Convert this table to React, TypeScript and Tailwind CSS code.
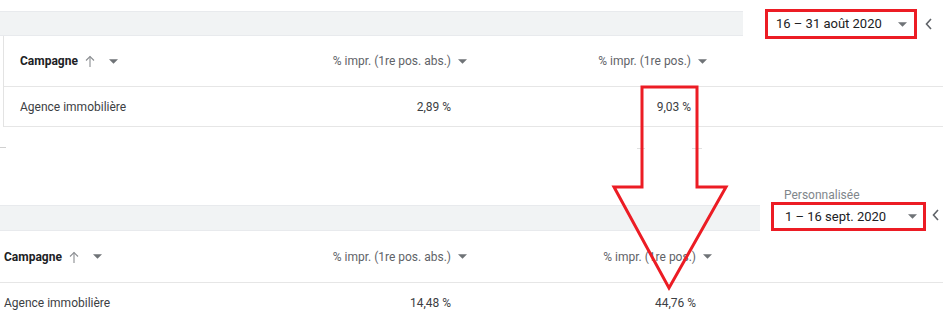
import React from "react";

type Col = { label: string; value: string };

const RED = "#ec1c24";

function DropTri({ className = "" }: { className?: string }) {
  return (
    <svg viewBox="0 0 10 5" className={`h-[5px] w-[9px] shrink-0 ${className}`}>
      <polygon points="0,0 10,0 5,5" fill="#6f7377" />
    </svg>
  );
}

function UpArrow() {
  return (
    <svg viewBox="0 0 10 12" className="h-[12px] w-[10px] shrink-0">
      <polyline points="1,5.5 5,1.5 9,5.5" fill="none" stroke="#8a8d91" strokeWidth="1.1" />
      <line x1="5" y1="1.5" x2="5" y2="12" stroke="#8a8d91" strokeWidth="1.1" />
    </svg>
  );
}

function Chevron() {
  return (
    <svg viewBox="0 0 7 12" className="h-[12px] w-[7px] shrink-0">
      <polyline points="6,1 1.5,6 6,11" fill="none" stroke="#5f6368" strokeWidth="1.6" />
    </svg>
  );
}

// one results table (header + single row)
function Table({
  padLeft,
  col1W,
  col2W,
  col3W,
  cols,
  bordered,
  headH,
  rowClass,
}: {
  padLeft: string;
  col1W: string;
  col2W: string;
  col3W: string;
  cols: Col[];
  bordered: boolean;
  headH: string;
  rowClass: string;
}) {
  const widths = [col2W, col3W];
  return (
    <div className={bordered ? "ml-[3px] border-l border-[#e3e3e3]" : ""}>
      <div className={`flex ${headH} items-center border-b border-[#e6e6e6]`}>
        <div className={`flex ${col1W} items-center ${padLeft}`}>
          <span className="text-[12px] font-bold text-[#202124]">Campagne</span>
          <span className="ml-[7px] flex">
            <UpArrow />
          </span>
          <DropTri className="ml-[14px]" />
        </div>
        {cols.map((c, i) => (
          <div key={c.label} className={`flex ${widths[i]} items-center justify-end pr-[5px]`}>
            <span className="text-[12px] text-[#5f6368]">{c.label}</span>
            <DropTri className="ml-[7px]" />
          </div>
        ))}
      </div>
      <div className={`flex h-[40px] items-center ${rowClass}`}>
        <div className={`${col1W} ${padLeft} text-[12px] text-[#3c4043]`}>Agence immobilière</div>
        {cols.map((c, i) => (
          <div key={c.label} className={`${widths[i]} pr-[21px] text-right text-[12px] text-[#3c4043]`}>
            {c.value}
          </div>
        ))}
      </div>
    </div>
  );
}

export default function App() {
  return (
    <div className="relative h-[327px] w-[943px] overflow-hidden bg-white font-['Roboto',sans-serif]">
      {/* top period */}
      <div className="flex h-[36px] items-start">
        <div className="mt-[11px] h-[25px] w-[743px] shrink-0 border-y border-[#e8eaed] bg-[#f1f3f4]" />
        <div
          className="ml-[22px] mt-[9px] flex h-[30px] w-[152px] shrink-0 items-center justify-between border-[3px] pl-[8px] pr-[7px]"
          style={{ borderColor: RED }}
        >
          <span className="text-[13px] text-[#202124]">16 – 31 août 2020</span>
          <DropTri />
        </div>
        <div className="ml-[8px] mt-[18px] flex">
          <Chevron />
        </div>
      </div>
      <Table
        padLeft="pl-[16px]"
        col1W="w-[250px]"
        col2W="w-[218px]"
        col3W="w-[240px]"
        bordered
        headH="h-[51px]"
        rowClass="border-b border-[#e6e6e6]"
        cols={[
          { label: "% impr. (1re pos. abs.)", value: "2,89 %" },
          { label: "% impr. (1re pos.)", value: "9,03 %" },
        ]}
      />

      <div className="h-[61px]" />

      {/* bottom period */}
      <div className="flex h-[43px] items-end">
        <div className="h-[26px] w-[760px] shrink-0 border-y border-[#e8eaed] bg-[#f1f3f4]" />
        <div className="ml-[11px] flex shrink-0 flex-col">
          <span className="pl-[13px] text-[12px] leading-[14px] text-[#80868b]">Personnalisée</span>
          <div
            className="flex h-[29px] w-[155px] items-center justify-between border-[3px] pl-[11px] pr-[6px]"
            style={{ borderColor: RED }}
          >
            <span className="text-[13px] text-[#202124]">1 – 16 sept. 2020</span>
            <DropTri />
          </div>
        </div>
        <div className="mb-[10px] ml-[6px] flex">
          <Chevron />
        </div>
      </div>
      <Table
        padLeft="pl-[4px]"
        col1W="w-[250px]"
        col2W="w-[222px]"
        col3W="w-[245px]"
        bordered={false}
        headH="h-[52px]"
        rowClass=""
        cols={[
          { label: "% impr. (1re pos. abs.)", value: "14,48 %" },
          { label: "% impr. (1re pos.)", value: "44,76 %" },
        ]}
      />

      {/* leftover edge marks of the cropped capture */}
      <div className="absolute left-0 top-[147px] h-px w-[6px] bg-[#d0d0d0]" />
      <div className="absolute left-[637px] top-[148px] h-px w-[8px] bg-[#e0e0e0]" />
      <div className="absolute left-[692px] top-[148px] h-px w-[10px] bg-[#e0e0e0]" />

      {/* annotation arrow */}
      <svg className="pointer-events-none absolute left-0 top-0" width="943" height="327" viewBox="0 0 943 327">
        <polygon
          points="642,87 697,87 697,187 726,187 669,288 614,187 642,187"
          fill="none"
          stroke={RED}
          strokeWidth="3"
        />
      </svg>
    </div>
  );
}
